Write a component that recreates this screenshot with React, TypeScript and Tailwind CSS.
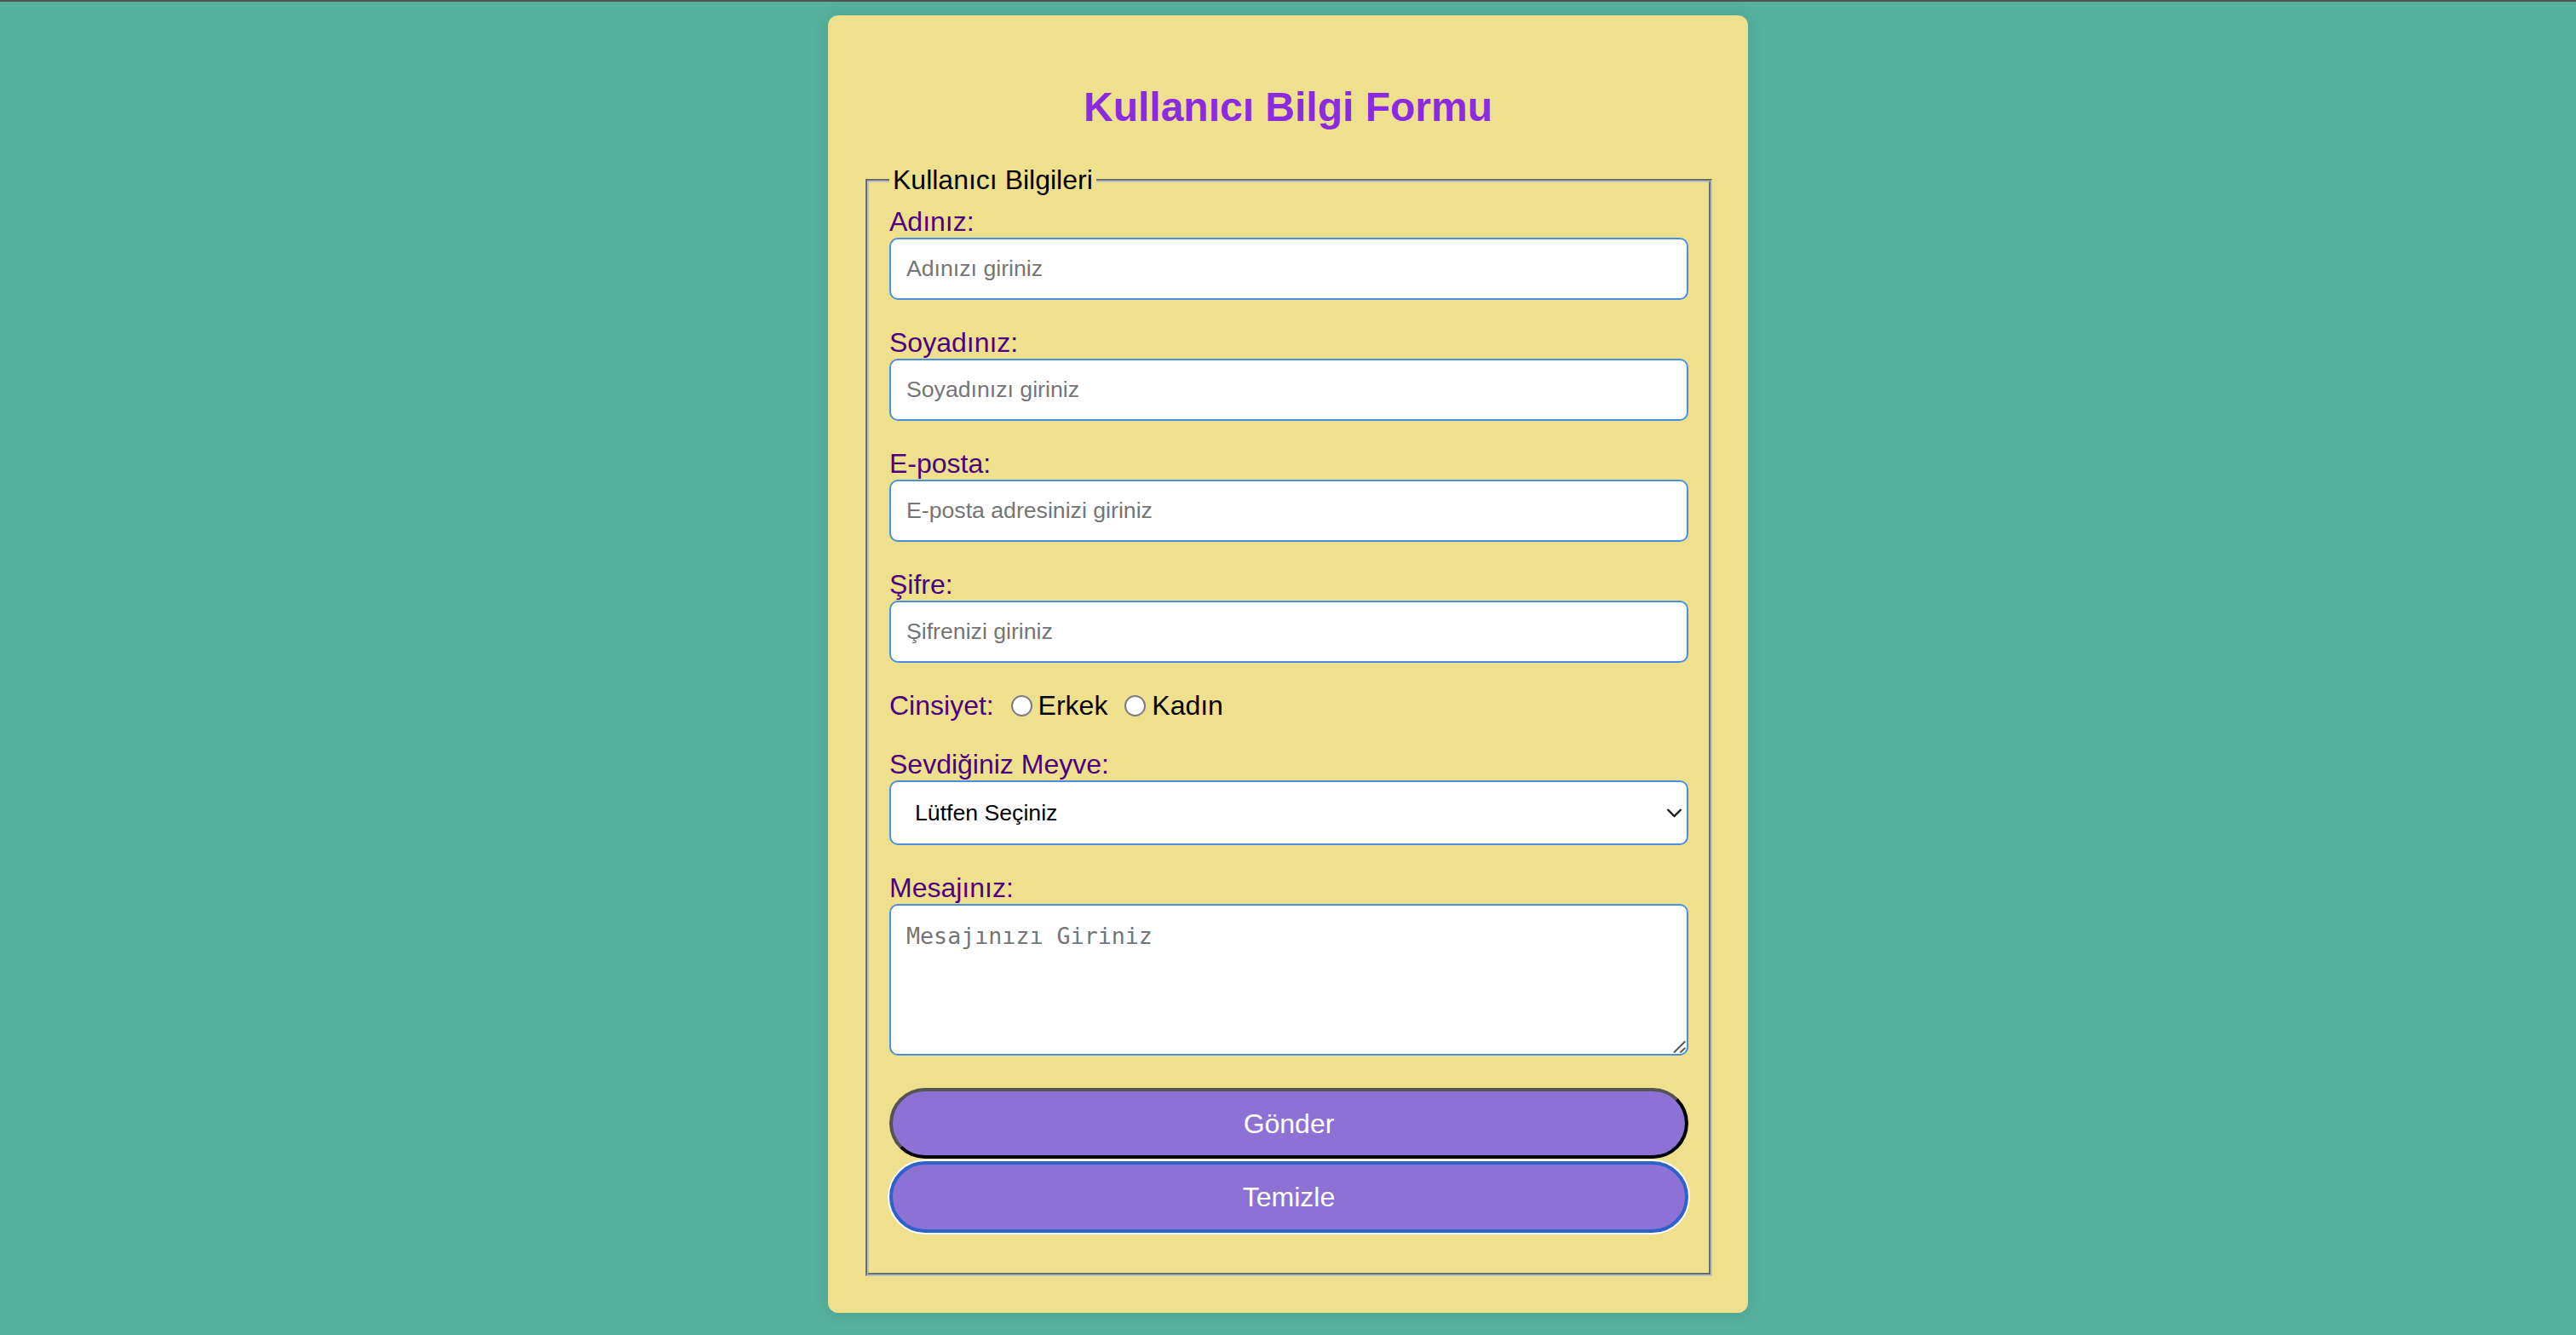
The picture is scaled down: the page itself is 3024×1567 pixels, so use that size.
const fields = [
  { label: "Adınız:", placeholder: "Adınızı giriniz", type: "text" },
  { label: "Soyadınız:", placeholder: "Soyadınızı giriniz", type: "text" },
  { label: "E-posta:", placeholder: "E-posta adresinizi giriniz", type: "email" },
  { label: "Şifre:", placeholder: "Şifrenizi giriniz", type: "password" },
];

const labelCls = "block text-[32px] leading-[37px] text-[#4b0082]";
const radioCls =
  "mr-[7px] ml-[11px] inline-block h-[25px] w-[25px] appearance-none rounded-full border-[2px] border-[#7c7c7c] bg-white align-[-2px]";

export default function App() {
  return (
    <div className="min-h-screen bg-[#55b29d] font-['Liberation_Sans',Arial,sans-serif]">
      <div className="h-[2px] bg-[#505050]" />
      <div className="mx-auto mt-[16px] w-[1080px] rounded-[12px] bg-[#efe08e] px-[40px] pt-[40px] pb-[43px] shadow-[0_0_20px_rgba(0,0,0,0.1)]">
        <h2 className="my-[40px] text-center text-[48px] leading-[55px] font-bold text-[#8a2be2]">
          Kullanıcı Bilgi Formu
        </h2>
        <fieldset className="ml-[4px] mr-[2px] border-[4px] border-[#c0c0c0] [border-style:groove] px-[24px] pt-[12px] pb-[47px]">
          <legend className="px-[4px] text-[32px] leading-[37px] text-black">Kullanıcı Bilgileri</legend>

          {fields.map((f) => (
            <div key={f.label} className="mb-[32px]">
              <label className={labelCls}>{f.label}</label>
              <input
                type={f.type}
                placeholder={f.placeholder}
                className="block h-[73px] w-full rounded-[10px] border-[2px] border-[#4a90e2] bg-white px-[18px] text-[26.67px] outline-none placeholder:text-[#757575]"
              />
            </div>
          ))}

          <div className="mb-[32px] text-[32px] leading-[37px]">
            <label className="text-[#4b0082]">Cinsiyet:</label>{" "}
            <input type="radio" name="cinsiyet" className={radioCls} />
            <label className="text-black">Erkek</label>{" "}
            <input type="radio" name="cinsiyet" className={radioCls} />
            <label className="text-black">Kadın</label>
          </div>

          <div className="mb-[32px]">
            <label className={labelCls}>Sevdiğiniz Meyve:</label>
            <div className="relative">
              <select className="block h-[76px] w-full appearance-none rounded-[10px] border-[2px] border-[#4a90e2] bg-white pl-[28px] text-[26.67px] text-black outline-none">
                <option>Lütfen Seçiniz</option>
                <option>Elma</option>
                <option>Armut</option>
                <option>Muz</option>
              </select>
              <svg
                className="pointer-events-none absolute top-1/2 right-[7px] -translate-y-1/2"
                width="19"
                height="11"
                viewBox="0 0 19 11"
                fill="none"
              >
                <polyline points="1.5,1.5 9.5,9.5 17.5,1.5" stroke="#1c1c1c" strokeWidth="2.4" />
              </svg>
            </div>
          </div>

          <div>
            <label className={labelCls}>Mesajınız:</label>
            <div className="relative">
              <textarea
                placeholder="Mesajınızı Giriniz"
                className="block h-[178px] w-full resize-none rounded-[10px] border-[2px] border-[#4a90e2] bg-white px-[18px] pt-[20px] font-['DejaVu_Sans_Mono',monospace] text-[26.67px] leading-[31px] outline-none placeholder:text-[#757575]"
              />
              <svg
                className="pointer-events-none absolute right-[3px] bottom-[3px]"
                width="15"
                height="15"
                viewBox="0 0 15 15"
                fill="none"
              >
                <line x1="1" y1="14.5" x2="14.3" y2="1.2" stroke="#555" strokeWidth="2" />
                <line x1="8.3" y1="14.5" x2="14.3" y2="9" stroke="#555" strokeWidth="2" />
              </svg>
            </div>
          </div>

          <button
            type="submit"
            className="mt-[38px] block h-[83px] w-full rounded-full border-[4px] border-black [border-style:outset] bg-[#8d72d5] text-[32px] text-white"
          >
            Gönder
          </button>
          <button
            type="reset"
            className="mt-[3px] block h-[84px] w-full rounded-full border-[4px] border-[#2d62cb] bg-[#8d72d5] text-[32px] text-white shadow-[0_0_0_2px_#ffffff]"
          >
            Temizle
          </button>
        </fieldset>
      </div>
    </div>
  );
}
